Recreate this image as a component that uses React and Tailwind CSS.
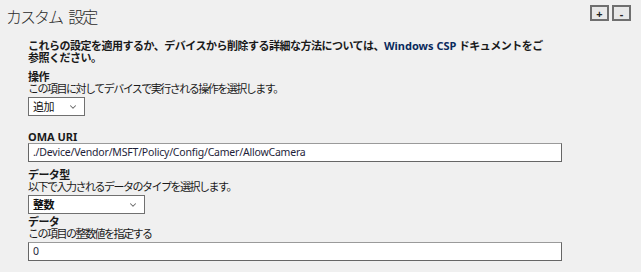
import { ChevronDown } from "lucide-react";

const FONT = { fontFamily: '"Noto Sans", "Noto Sans CJK JP", sans-serif' };

function Label({ children, className = "" }) {
  return (
    <div className={"h-[12px] whitespace-nowrap text-[11px] font-bold leading-[12px] tracking-[-0.6px] text-[#1a1a1a] " + className}>
      {children}
    </div>
  );
}

function Hint({ children }) {
  return (
    <div className="h-[12px] whitespace-nowrap text-[11px] leading-[12px] tracking-[-1.5px] text-[#1a1a1a]">
      {children}
    </div>
  );
}

function Select({ value, width, bold }) {
  return (
    <div
      className={
        "mt-[2px] flex h-[19px] items-center justify-between border border-[#707070] bg-white pl-[4px] pr-[6px] " + width
      }
    >
      <span
        className={
          "text-[11px] leading-[17px] tracking-[-0.6px] text-[#111] " + (bold ? "font-bold" : "")
        }
      >
        {value}
      </span>
      <ChevronDown size={10} strokeWidth={2.5} className="text-[#666]" />
    </div>
  );
}

function TextBox({ value, className = "" }) {
  return (
    <div
      className={
        "flex h-[19px] w-[534px] items-center border border-[#666] border-t-[#9a9a9a] bg-white pl-[4px] " + className
      }
    >
      <span className="text-[10.5px] leading-[17px] tracking-[-0.2px] text-[#1e1e3a]">{value}</span>
    </div>
  );
}

export default function App() {
  return (
    <div className="h-[272px] w-[641px] overflow-hidden bg-[#f0f0f0]" style={FONT}>
      {/* Header */}
      <div className="flex h-[40px] items-start justify-between">
        <h1 className="whitespace-nowrap pl-[6px] pt-[6px] text-[16px] font-light leading-[22px] tracking-[-2px] text-[#2b2b2b] [word-spacing:4px]">
          カスタム 設定
        </h1>
        <div className="mr-[10px] mt-[5px] flex gap-[3px]">
          <button className="flex h-[16px] w-[19px] items-center justify-center border-2 border-[#6f6f6f] bg-[#e8e8e8] text-[11px] font-bold leading-none text-[#222]">
            +
          </button>
          <button className="flex h-[16px] w-[19px] items-center justify-center border-2 border-[#6f6f6f] bg-[#e8e8e8] text-[11px] font-bold leading-none text-[#222]">
            -
          </button>
        </div>
      </div>

      {/* Form */}
      <div className="pl-[28px]">
        <div className="text-[11px] font-bold leading-[12px] tracking-[-0.5px] text-[#1a1a1a]">
          <div className="whitespace-nowrap">
            これらの設定を適用するか、デバイスから削除する詳細な方法については、
            <span className="tracking-normal text-[#0a2a5c]">Windows CSP</span> ドキュメントをご
          </div>
          <div className="whitespace-nowrap">参照ください。</div>
        </div>

        <Label className="mt-[7px]">操作</Label>
        <Hint>この項目に対してデバイスで実行される操作を選択します。</Hint>
        <Select value="追加" width="w-[57px]" />

        <Label className="mt-[15px] tracking-normal">OMA URI</Label>
        <TextBox value="./Device/Vendor/MSFT/Policy/Config/Camer/AllowCamera" />

        <Label className="mt-[7px]">データ型</Label>
        <Hint>以下で入力されるデータのタイプを選択します。</Hint>
        <Select value="整数" width="w-[117px]" bold />

        <Label className="mt-[2px]">データ</Label>
        <Hint>この項目の整数値を指定する</Hint>
        <TextBox value="0" className="mt-[2px]" />
      </div>
    </div>
  );
}
